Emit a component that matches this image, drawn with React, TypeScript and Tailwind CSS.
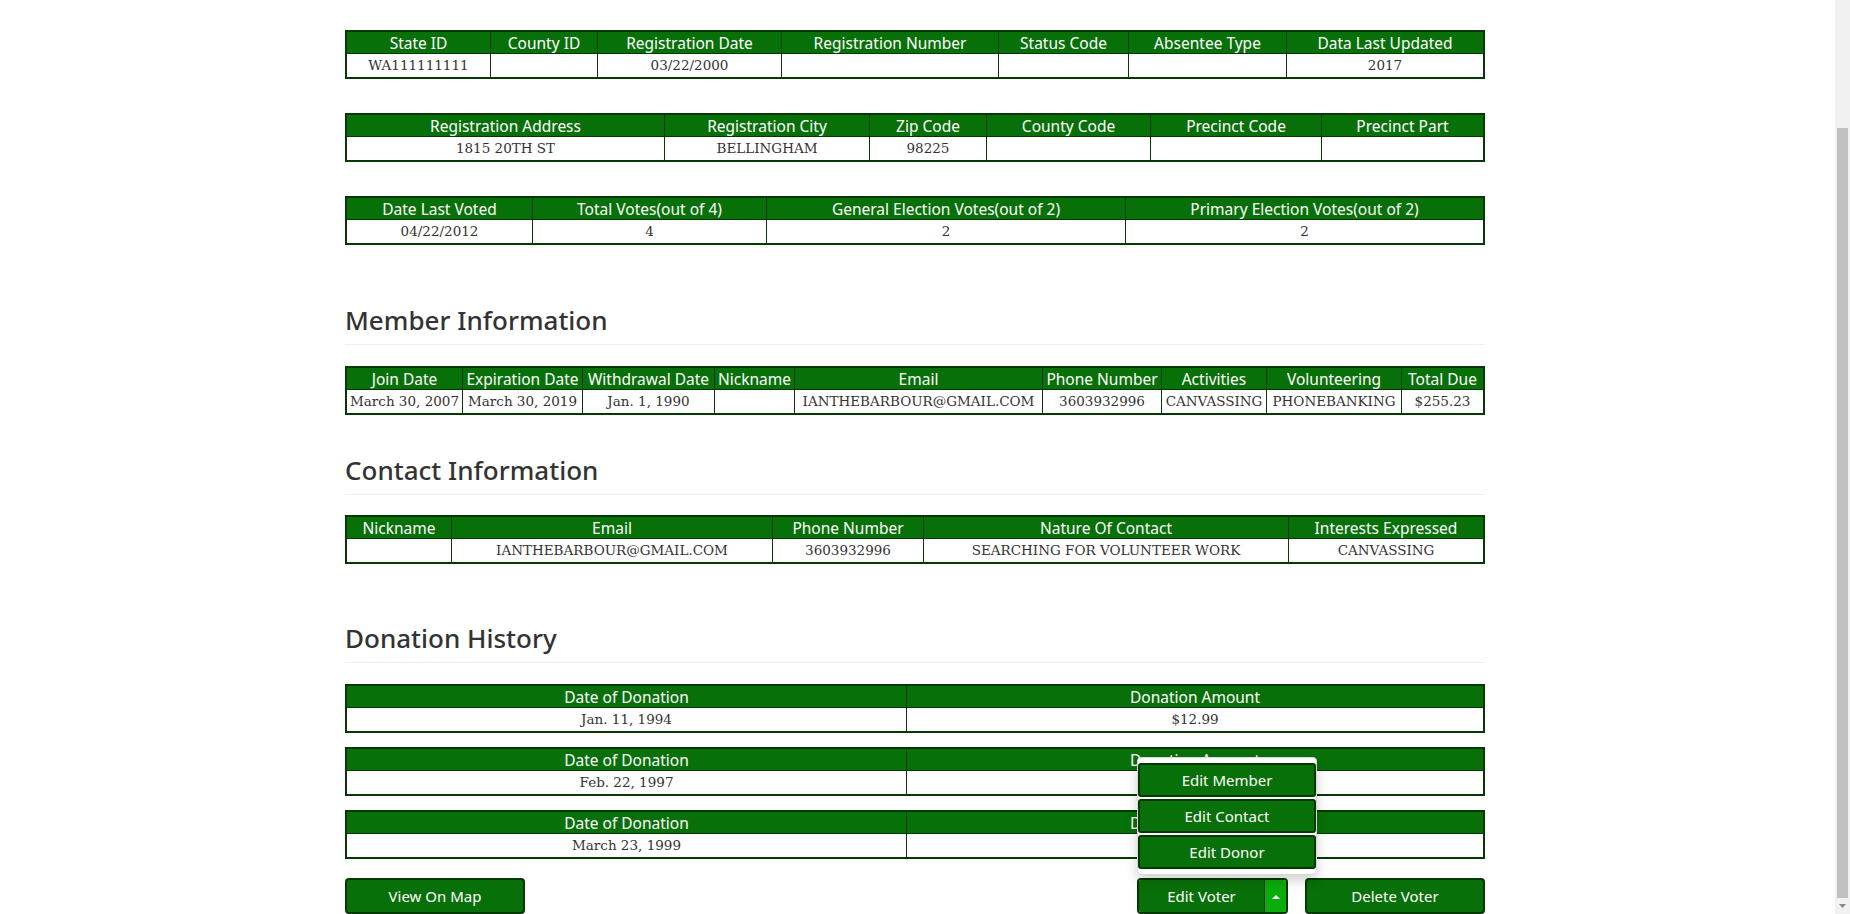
import React, { useLayoutEffect, useRef } from "react";

type TableProps = {
  cols: number[];
  headers: string[];
  values: string[];
  className?: string;
};

function DataTable({ cols, headers, values, className = "" }: TableProps) {
  const last = cols.length - 1;
  const cellBase = "flex items-center justify-center overflow-hidden whitespace-nowrap";
  return (
    <div className={`border-2 border-[#053805] bg-white ${className}`} role="table">
      <div className="flex h-[21px] bg-[#087008]" role="row">
        {headers.map((h, i) => (
          <div
            key={i}
            role="columnheader"
            className={`${cellBase} ${i > 0 ? "border-l border-[#053805]" : ""} ${i === last ? "flex-1" : "flex-none"} font-['Noto_Sans',sans-serif] text-[15.5px] leading-[20px] text-white`}
            style={i === last ? undefined : { width: `${cols[i]}px` }}
          >
            {h}
          </div>
        ))}
      </div>
      <div className="flex h-[24px] border-t border-[#053805]" role="row">
        {values.map((v, i) => (
          <div
            key={i}
            role="cell"
            className={`${cellBase} ${i > 0 ? "border-l border-[#053805]" : ""} ${i === last ? "flex-1" : "flex-none"} font-['DejaVu_Serif',serif] text-[13.5px] leading-[21px] text-[#333]`}
            style={i === last ? undefined : { width: `${cols[i]}px` }}
          >
            {v}
          </div>
        ))}
      </div>
    </div>
  );
}

function SectionHeading({ title, className = "" }: { title: string; className?: string }) {
  return (
    <div className={`border-b border-[#eeeeee] pb-[9px] ${className}`}>
      <h2 className="font-['Noto_Sans',sans-serif] text-[26px] font-medium leading-[30px] text-[#333]">
        {title}
      </h2>
    </div>
  );
}

const btn =
  "h-[36px] rounded-[4px] border-2 border-[#053805] bg-[#087008] font-['Noto_Sans',sans-serif] text-[15px] text-white flex items-center justify-center";

const menuItem =
  "h-[34px] w-full rounded-[3px] border-2 border-[#053805] bg-[#087008] font-['Noto_Sans',sans-serif] text-[15px] text-white";

export default function App() {
  const ref = useRef<HTMLDivElement>(null);
  useLayoutEffect(() => {
    if (ref.current) ref.current.scrollTop = ref.current.scrollHeight;
  }, []);

  return (
    <div className="flex h-screen w-full overflow-hidden bg-white">
      <div ref={ref} className="h-full flex-1 overflow-hidden">
        <div className="ml-[345px] w-[1140px]">
          <SectionHeading title="Voter Information" className="pt-[40px]" />

          <DataTable
            className="mt-[85px]"
            cols={[143, 107, 184, 217, 130, 158, 198]}
            headers={[
              "State ID",
              "County ID",
              "Registration Date",
              "Registration Number",
              "Status Code",
              "Absentee Type",
              "Data Last Updated",
            ]}
            values={["WA111111111", "", "03/22/2000", "", "", "", "2017"]}
          />
          <DataTable
            className="mt-[34px]"
            cols={[317, 205, 117, 164, 171, 163]}
            headers={[
              "Registration Address",
              "Registration City",
              "Zip Code",
              "County Code",
              "Precinct Code",
              "Precinct Part",
            ]}
            values={["1815 20TH ST", "BELLINGHAM", "98225", "", "", ""]}
          />
          <DataTable
            className="mt-[34px]"
            cols={[185, 234, 359, 359]}
            headers={[
              "Date Last Voted",
              "Total Votes(out of 4)",
              "General Election Votes(out of 2)",
              "Primary Election Votes(out of 2)",
            ]}
            values={["04/22/2012", "4", "2", "2"]}
          />

          <SectionHeading title="Member Information" className="mt-[60px]" />
          <DataTable
            className="mt-[21px]"
            cols={[115, 120, 132, 80, 248, 119, 105, 135, 82]}
            headers={[
              "Join Date",
              "Expiration Date",
              "Withdrawal Date",
              "Nickname",
              "Email",
              "Phone Number",
              "Activities",
              "Volunteering",
              "Total Due",
            ]}
            values={[
              "March 30, 2007",
              "March 30, 2019",
              "Jan. 1, 1990",
              "",
              "IANTHEBARBOUR@GMAIL.COM",
              "3603932996",
              "CANVASSING",
              "PHONEBANKING",
              "$255.23",
            ]}
          />

          <SectionHeading title="Contact Information" className="mt-[40px]" />
          <DataTable
            className="mt-[20px]"
            cols={[104, 321, 151, 365, 197]}
            headers={["Nickname", "Email", "Phone Number", "Nature Of Contact", "Interests Expressed"]}
            values={[
              "",
              "IANTHEBARBOUR@GMAIL.COM",
              "3603932996",
              "SEARCHING FOR VOLUNTEER WORK",
              "CANVASSING",
            ]}
          />

          <SectionHeading title="Donation History" className="mt-[59px]" />
          <DataTable
            className="mt-[21px]"
            cols={[559, 578]}
            headers={["Date of Donation", "Donation Amount"]}
            values={["Jan. 11, 1994", "$12.99"]}
          />
          <DataTable
            className="mt-[14px]"
            cols={[559, 578]}
            headers={["Date of Donation", "Donation Amount"]}
            values={["Feb. 22, 1997", "$25.00"]}
          />
          <DataTable
            className="mt-[14px]"
            cols={[559, 578]}
            headers={["Date of Donation", "Donation Amount"]}
            values={["March 23, 1999", "$40.00"]}
          />

          <div className="mt-[19px] flex items-start">
            <button className={`${btn} w-[180px]`}>View On Map</button>
            <div className="ml-auto flex gap-[17px]">
              <div className="relative">
                <div className="absolute bottom-full left-0 mb-[3px] flex w-[180px] flex-col gap-[2px] rounded-[4px] border border-[#d8d8d8] bg-white py-[5px] shadow-[0_6px_12px_rgba(0,0,0,0.175)]">
                  <button className={menuItem}>Edit Member</button>
                  <button className={menuItem}>Edit Contact</button>
                  <button className={menuItem}>Edit Donor</button>
                </div>
                <div className="flex h-[36px] w-[151px] overflow-hidden rounded-[4px] border-2 border-[#053805]">
                  <button className="flex-1 bg-[#087008] font-['Noto_Sans',sans-serif] text-[15px] text-white">
                    Edit Voter
                  </button>
                  <button className="flex w-[22px] items-center justify-center border-l border-[#053805] bg-[#0aad0a]">
                    <svg width="8" height="5" viewBox="0 0 8 5">
                      <path d="M0 5 L4 1 L8 5 Z" fill="white" />
                    </svg>
                  </button>
                </div>
              </div>
              <button className={`${btn} w-[180px]`}>Delete Voter</button>
            </div>
          </div>
        </div>
      </div>

      <div className="flex h-full w-[15px] flex-col bg-[#f1f1f1]">
        <div className="h-[128px]" />
        <div className="mx-[2px] h-[770px] bg-[#c1c1c1]" />
        <div className="flex flex-1 items-center justify-center">
          <svg width="7" height="4" viewBox="0 0 7 4">
            <path d="M0 0 L7 0 L3.5 4 Z" fill="#8a8a8a" />
          </svg>
        </div>
      </div>
    </div>
  );
}
